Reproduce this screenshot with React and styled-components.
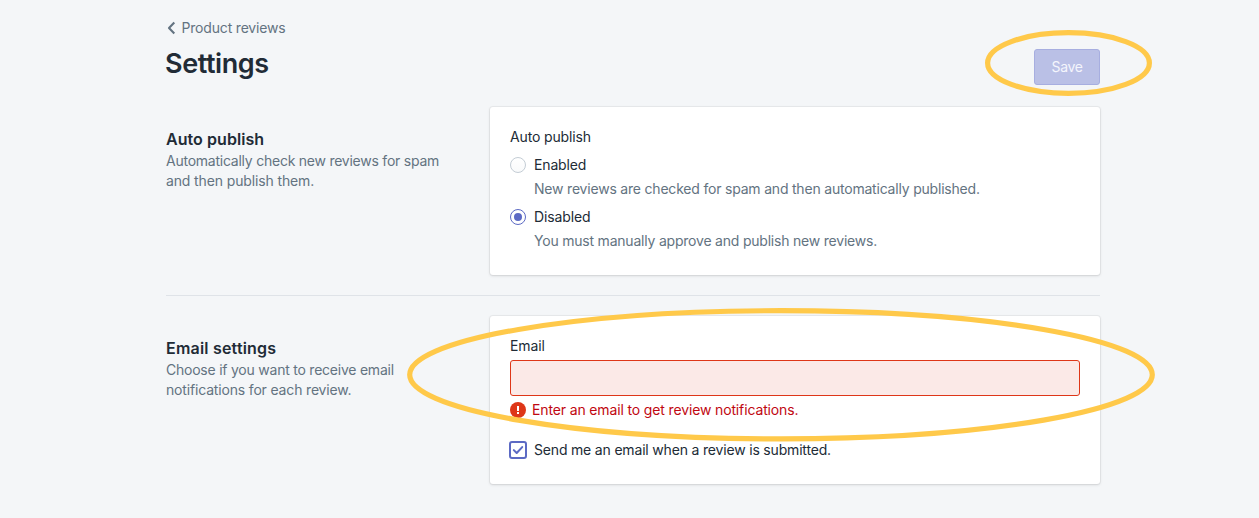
import React from "react";
import styled, { createGlobalStyle, css } from "styled-components";

const GlobalStyle = createGlobalStyle`
  *, *::before, *::after { box-sizing: border-box; }
  body {
    margin: 0;
    background: #f4f6f8;
    color: #212b36;
    font-family: Inter, "Liberation Sans", sans-serif;
    font-size: 14px;
    line-height: 20px;
    overflow: hidden;
  }
`;

const Page = styled.main`
  position: relative;
  width: 1259px;
  height: 518px;
  padding: 18px 159px 0 166px;
`;

const Breadcrumb = styled.a`
  display: flex;
  align-items: center;
  gap: 5.5px;
  height: 20px;
  color: #637381;
`;

const Text = styled.span`
  white-space: nowrap;
  letter-spacing: ${(p) => p.$track || 0}px;
`;

const TitleBar = styled.header`
  display: flex;
  justify-content: space-between;
  align-items: flex-start;
  height: 69px;
`;

const Title = styled.h1`
  margin: 8px 0 0 -1px;
  font-size: 27px;
  font-weight: 600;
  line-height: 36px;
  letter-spacing: -0.42px;
`;

const SaveButton = styled.button`
  width: 66px;
  height: 36px;
  margin-top: 11px;
  padding: 0;
  border: 1px solid #a7aee0;
  border-radius: 3px;
  background: #bac0e6;
  color: #f4f5fc;
  font: inherit;
`;

const Section = styled.section`
  display: grid;
  grid-template-columns: 324px 610px;
  ${(p) =>
    p.$divided &&
    css`
      margin-top: 20px;
      padding-top: 20px;
      border-top: 1px solid #dfe3e8;
    `}
`;

const Annotation = styled.div`
  display: flex;
  flex-direction: column;
  padding-top: 20px;
  color: #637381;
`;

const SectionTitle = styled.h2`
  margin: 0;
  color: #212b36;
  font-size: 16px;
  font-weight: 600;
  line-height: 24px;
  letter-spacing: ${(p) => p.$track || 0}px;
`;

const Card = styled.div`
  display: flex;
  flex-direction: column;
  height: 168px;
  padding: 20px;
  border-radius: 3px;
  background: #fff;
  box-shadow: 0 0 0 1px rgba(63, 63, 68, 0.06), 0 1px 3px rgba(63, 63, 68, 0.16);
`;

const Label = styled.label`
  display: block;
  margin-bottom: 4px;
`;

const Choice = styled.label`
  display: flex;
  align-items: center;
  gap: 8px;
  height: 28px;
  margin-top: ${(p) => p.$top || 0}px;
`;

const Help = styled.p`
  margin: 0 0 4px 24px;
  color: #637381;
`;

const Radio = styled.span`
  display: grid;
  place-items: center;
  width: 16px;
  height: 16px;
  border: 1px solid ${(p) => (p.$checked ? "#5c6ac4" : "#c4cdd5")};
  border-radius: 50%;
  background: ${(p) => (p.$checked ? "#fff" : "linear-gradient(#fff, #f9fafb)")};

  &::after {
    content: "";
    width: 8px;
    height: 8px;
    border-radius: 50%;
    background: ${(p) => (p.$checked ? "#5c6ac4" : "transparent")};
  }
`;

const Checkbox = styled.span`
  display: grid;
  place-items: center;
  width: 18px;
  height: 18px;
  margin: 0 -1px;
  border: 2px solid #5c6ac4;
  border-radius: 3px;
`;

const EmailInput = styled.input`
  width: 100%;
  height: 36px;
  padding: 5px 12px;
  border: 1px solid #de3618;
  border-radius: 3px;
  background: #fbe9e7;
  font: inherit;
  outline: none;
`;

const ErrorMessage = styled.div`
  display: flex;
  align-items: center;
  gap: 6px;
  height: 20px;
  margin-top: 4px;
  color: #bf0711;
`;

const Highlights = styled.svg`
  position: absolute;
  inset: 0;
  pointer-events: none;
`;

function BackIcon() {
  return (
    <svg width="10" height="14" viewBox="0 0 10 14" fill="none">
      <path d="M8.3 1.6 3 7l5.3 5.4" stroke="#637381" strokeWidth="2.1" strokeLinejoin="round" />
    </svg>
  );
}

function CheckIcon() {
  return (
    <svg width="12" height="10" viewBox="0 0 12 10" fill="none">
      <path d="M1.8 5.1 4.7 8 10.2 2.1" stroke="#5c6ac4" strokeWidth="2" strokeLinecap="round" strokeLinejoin="round" />
    </svg>
  );
}

function AlertIcon() {
  return (
    <svg width="16" height="16" viewBox="0 0 16 16">
      <circle cx="8" cy="8" r="8" fill="#de3618" />
      <path d="M7 4h2v5H7zM7 10h2v2H7z" fill="#fff" />
    </svg>
  );
}

export default function App() {
  return (
    <>
      <GlobalStyle />
      <Page>
        <Breadcrumb>
          <BackIcon />
          <Text $track={-0.18}>Product reviews</Text>
        </Breadcrumb>
        <TitleBar>
          <Title>Settings</Title>
          <SaveButton><Text $track={-0.35}>Save</Text></SaveButton>
        </TitleBar>

        <Section>
          <Annotation>
            <SectionTitle $track={0.06}>Auto publish</SectionTitle>
            <Text $track={-0.24}>Automatically check new reviews for spam</Text>
            <Text $track={-0.13}>and then publish them.</Text>
          </Annotation>
          <Card>
            <Label as="div"><Text $track={-0.15}>Auto publish</Text></Label>
            <Choice>
              <Radio />
              <Text $track={-0.15}>Enabled</Text>
            </Choice>
            <Help><Text $track={-0.2}>New reviews are checked for spam and then automatically published.</Text></Help>
            <Choice>
              <Radio $checked />
              <Text $track={-0.13}>Disabled</Text>
            </Choice>
            <Help><Text $track={-0.21}>You must manually approve and publish new reviews.</Text></Help>
          </Card>
        </Section>

        <Section $divided>
          <Annotation>
            <SectionTitle $track={0.2}>Email settings</SectionTitle>
            <Text $track={-0.23}>Choose if you want to receive email</Text>
            <Text $track={-0.17}>notifications for each review.</Text>
          </Annotation>
          <Card>
            <Label htmlFor="email"><Text $track={-0.12}>Email</Text></Label>
            <EmailInput id="email" />
            <ErrorMessage>
              <AlertIcon />
              <Text $track={-0.14}>Enter an email to get review notifications.</Text>
            </ErrorMessage>
            <Choice $top={16}>
              <Checkbox><CheckIcon /></Checkbox>
              <Text $track={-0.18}>Send me an email when a review is submitted.</Text>
            </Choice>
          </Card>
        </Section>

        <Highlights width="1259" height="518" fill="none" stroke="#ffc94a" strokeWidth="5.2">
          <ellipse cx="1068.5" cy="63" rx="80.9" ry="30.3" />
          <ellipse cx="781" cy="374.8" rx="371.3" ry="64.1" />
        </Highlights>
      </Page>
    </>
  );
}
